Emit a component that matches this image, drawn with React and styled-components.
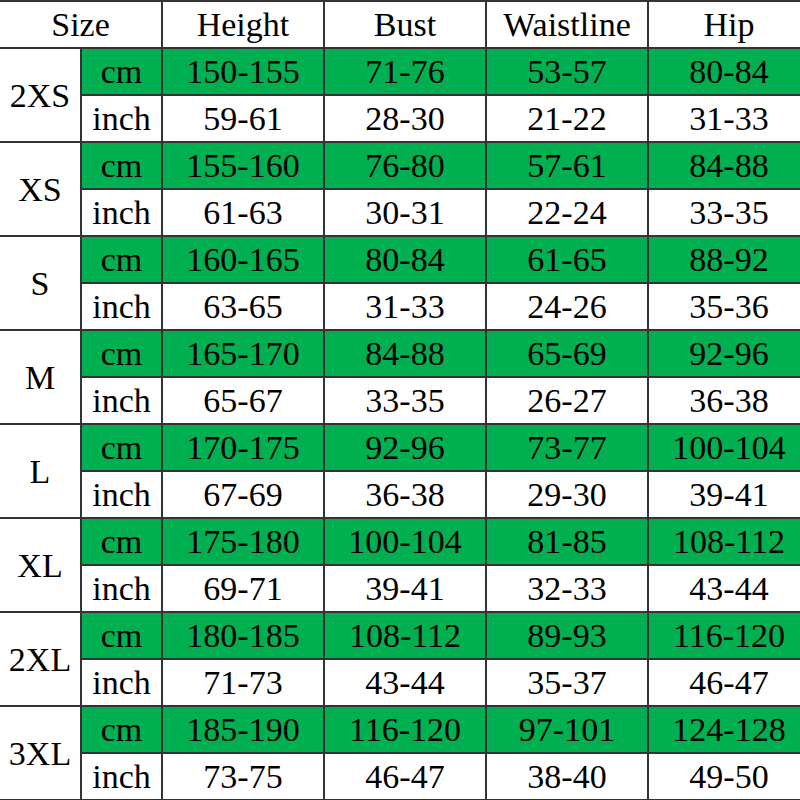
import React from "react";
import styled, { createGlobalStyle } from "styled-components";

const Global = createGlobalStyle`
  html, body { margin: 0; padding: 0; background: #fff; overflow: hidden; }
  body { width: 800px; height: 800px; }
`;

const Frame = styled.div`
  width: 800px;
  height: 800px;
  overflow: hidden;
  background: #fff;
`;

const Grid = styled.div`
  width: 820px;
  display: grid;
  grid-template-columns: 80px 79px 160px 160px 160px 160px;
  grid-auto-rows: 45px;
  gap: 2px;
  padding: 2px 0 2px 0;
  background: #333;
  font-family: "Liberation Serif", "Times New Roman", serif;
  font-size: 34px;
  color: #000;
`;

const Cell = styled.div`
  display: flex;
  align-items: center;
  justify-content: center;
  background: ${(p) => (p.$green ? "#00b050" : "#fff")};
  grid-column: ${(p) => (p.$colSpan ? `span ${p.$colSpan}` : "auto")};
  grid-row: ${(p) => (p.$rowSpan ? `span ${p.$rowSpan}` : "auto")};
  line-height: 1;
  white-space: nowrap;
  padding-top: 1px;
`;

const rows = [
  ["2XS", ["150-155", "71-76", "53-57", "80-84"], ["59-61", "28-30", "21-22", "31-33"]],
  ["XS", ["155-160", "76-80", "57-61", "84-88"], ["61-63", "30-31", "22-24", "33-35"]],
  ["S", ["160-165", "80-84", "61-65", "88-92"], ["63-65", "31-33", "24-26", "35-36"]],
  ["M", ["165-170", "84-88", "65-69", "92-96"], ["65-67", "33-35", "26-27", "36-38"]],
  ["L", ["170-175", "92-96", "73-77", "100-104"], ["67-69", "36-38", "29-30", "39-41"]],
  ["XL", ["175-180", "100-104", "81-85", "108-112"], ["69-71", "39-41", "32-33", "43-44"]],
  ["2XL", ["180-185", "108-112", "89-93", "116-120"], ["71-73", "43-44", "35-37", "46-47"]],
  ["3XL", ["185-190", "116-120", "97-101", "124-128"], ["73-75", "46-47", "38-40", "49-50"]],
];

export default function App() {
  return (
    <Frame>
      <Global />
      <Grid>
        <Cell $colSpan={2}>Size</Cell>
        <Cell>Height</Cell>
        <Cell>Bust</Cell>
        <Cell>Waistline</Cell>
        <Cell>Hip</Cell>
        {rows.map(([size, cm, inch]) => (
          <React.Fragment key={size}>
            <Cell $rowSpan={2}>{size}</Cell>
            <Cell $green>cm</Cell>
            {cm.map((v, i) => (
              <Cell $green key={"c" + i}>{v}</Cell>
            ))}
            <Cell>inch</Cell>
            {inch.map((v, i) => (
              <Cell key={"i" + i}>{v}</Cell>
            ))}
          </React.Fragment>
        ))}
      </Grid>
    </Frame>
  );
}
